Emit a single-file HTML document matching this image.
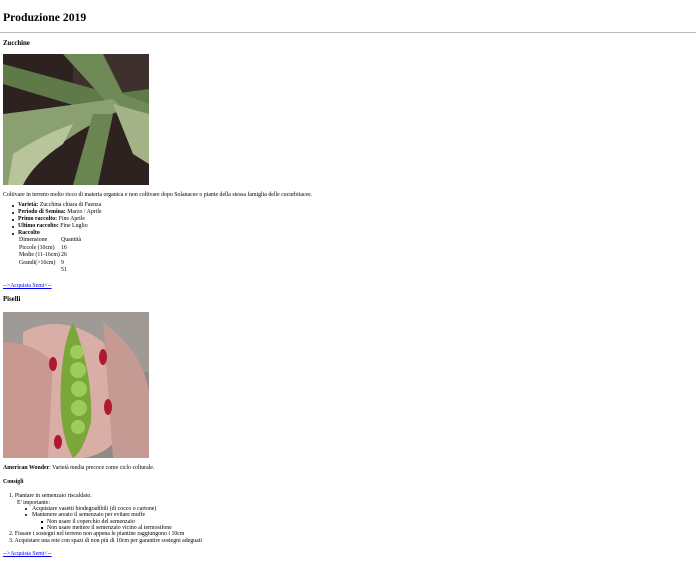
<!DOCTYPE html>
<html><head><meta charset="utf-8"><style>
body{margin:0;width:699px;height:561px;background:#fff;font-family:"Liberation Serif",serif;color:#000;position:relative;overflow:hidden}
.a{position:absolute;white-space:nowrap;font-size:5.85px;line-height:7px}
b{font-weight:bold}
.l{color:#00e;text-decoration:underline}
.d{position:absolute;width:2px;height:2px;background:#000;border-radius:50%}
.c{position:absolute;width:2px;height:2px;border:0.6px solid #000;border-radius:50%;box-sizing:border-box}
.s{position:absolute;width:2px;height:2px;background:#000}
</style></head><body>
<div class="a" style="left:3px;top:10px;font-size:11.7px;line-height:15px;font-weight:bold">Produzione 2019</div>
<div style="position:absolute;left:0;top:32px;width:696px;height:1px;background:#bbb"></div>
<div class="a" style="left:3px;top:40px;font-size:6.8px;font-weight:bold">Zucchine</div>
<svg style="position:absolute;left:3px;top:54px" width="146" height="131" viewBox="0 0 146 131">
<rect width="146" height="131" fill="#2e2220"/>
<rect x="70" y="0" width="76" height="60" fill="#3e302c"/>
<path d="M0 10 L110 40 L146 35 L146 55 L100 60 L0 30Z" fill="#5f7a48"/>
<path d="M60 0 L100 0 L120 40 L146 50 L146 70 L110 55Z" fill="#6f8a56"/>
<path d="M0 60 Q40 55 110 45 L120 55 Q60 80 10 131 L0 131Z" fill="#8aa070"/>
<path d="M90 60 L110 60 L95 131 L70 131Z" fill="#6a8452"/>
<path d="M110 50 L146 60 L146 110 L130 100Z" fill="#a4b488"/>
<path d="M10 100 Q40 80 70 70 L60 90 Q30 110 20 131 L5 131Z" fill="#b8c49a"/>
</svg>
<div class="a" style="left:3px;top:192px">Coltivare in terreno molto ricco di materia organica e non coltivare dopo Solanacee o piante della stessa famiglia delle cucurbitacee.</div>
<div class="d" style="left:12px;top:205px"></div><div class="a" style="left:18px;top:202px"><b>Varietà:</b> Zucchina chiara di Faenza</div>
<div class="d" style="left:12px;top:212px"></div><div class="a" style="left:18px;top:209px"><b>Periodo di Semina:</b> Marzo / Aprile</div>
<div class="d" style="left:12px;top:219px"></div><div class="a" style="left:18px;top:216px"><b>Primo raccolto:</b> Fine Aprile</div>
<div class="d" style="left:12px;top:226px"></div><div class="a" style="left:18px;top:223px"><b>Ultimo raccolto:</b> Fine Luglio</div>
<div class="d" style="left:12px;top:233px"></div><div class="a" style="left:18px;top:230px"><b>Raccolto</b></div>
<div class="a" style="left:19px;top:237px">Dimensione</div><div class="a" style="left:61px;top:237px">Quantità</div>
<div class="a" style="left:19px;top:245px">Piccole (10cm)</div><div class="a" style="left:61px;top:245px">16</div>
<div class="a" style="left:19px;top:252px">Medie (11-16cm)</div><div class="a" style="left:61px;top:252px">26</div>
<div class="a" style="left:19px;top:260px">Grandi(&gt;16cm)</div><div class="a" style="left:61px;top:260px">9</div>
<div class="a" style="left:61px;top:267px">51</div>
<div class="a l" style="left:3px;top:283px">--&gt;Acquista Semi&lt;--</div>
<div class="a" style="left:3px;top:296px;font-size:6.8px;font-weight:bold">Piselli</div>
<svg style="position:absolute;left:3px;top:312px" width="146" height="146" viewBox="0 0 146 146">
<rect width="146" height="146" fill="#8e8a86"/>
<rect x="0" y="0" width="146" height="60" fill="#a09a96"/>
<path d="M20 20 Q60 0 100 30 L130 90 Q120 140 80 146 L40 146 Q10 110 20 60Z" fill="#d9aea6"/>
<path d="M0 30 Q30 30 50 50 L45 146 L0 146Z" fill="#c99890"/>
<path d="M100 10 Q140 40 146 80 L146 146 L110 146Z" fill="#c49a92"/>
<path d="M70 10 Q90 60 88 110 Q80 140 70 146 Q55 120 58 70 Q60 30 70 10Z" fill="#7aa63a"/>
<g fill="#9ccc5a"><circle cx="74" cy="40" r="7"/><circle cx="75" cy="58" r="8"/><circle cx="76" cy="77" r="8"/><circle cx="76" cy="96" r="8"/><circle cx="75" cy="115" r="7"/></g>
<g fill="#b01830"><ellipse cx="50" cy="52" rx="4" ry="7"/><ellipse cx="100" cy="45" rx="4" ry="8"/><ellipse cx="105" cy="95" rx="4" ry="8"/><ellipse cx="55" cy="130" rx="4" ry="7"/></g>
</svg>
<div class="a" style="left:3px;top:465px"><b>American Wonder</b>: Varietà media precoce come ciclo colturale.</div>
<div class="a" style="left:3px;top:479px;font-weight:bold">Consigli</div>
<div class="a" style="left:9px;top:493px">1. Piantare in semenzaio riscaldato.</div>
<div class="a" style="left:17px;top:500px">E' importante:</div>
<div class="c" style="left:25px;top:508px"></div><div class="a" style="left:32px;top:506px">Acquistare vasetti biodegradibili (di cocco o cartone)</div>
<div class="c" style="left:25px;top:514px"></div><div class="a" style="left:32px;top:512px">Mantenere areato il semenzaio per evitare muffe</div>
<div class="s" style="left:41px;top:521px"></div><div class="a" style="left:47px;top:519px">Non usare il coperchio del semenzaio</div>
<div class="s" style="left:41px;top:527px"></div><div class="a" style="left:47px;top:525px">Non usare mettere il semenzaio vicino al termosifone</div>
<div class="a" style="left:9px;top:531px">2. Fissare i sostegni nel terreno non appena le piantine raggiungono i 10cm</div>
<div class="a" style="left:9px;top:538px">3. Acquistare una rete con spazi di non più di 10cm per garantire sostegni adeguati</div>
<div class="a l" style="left:3px;top:551px">--&gt;Acquista Semi&lt;--</div>
</body></html>
